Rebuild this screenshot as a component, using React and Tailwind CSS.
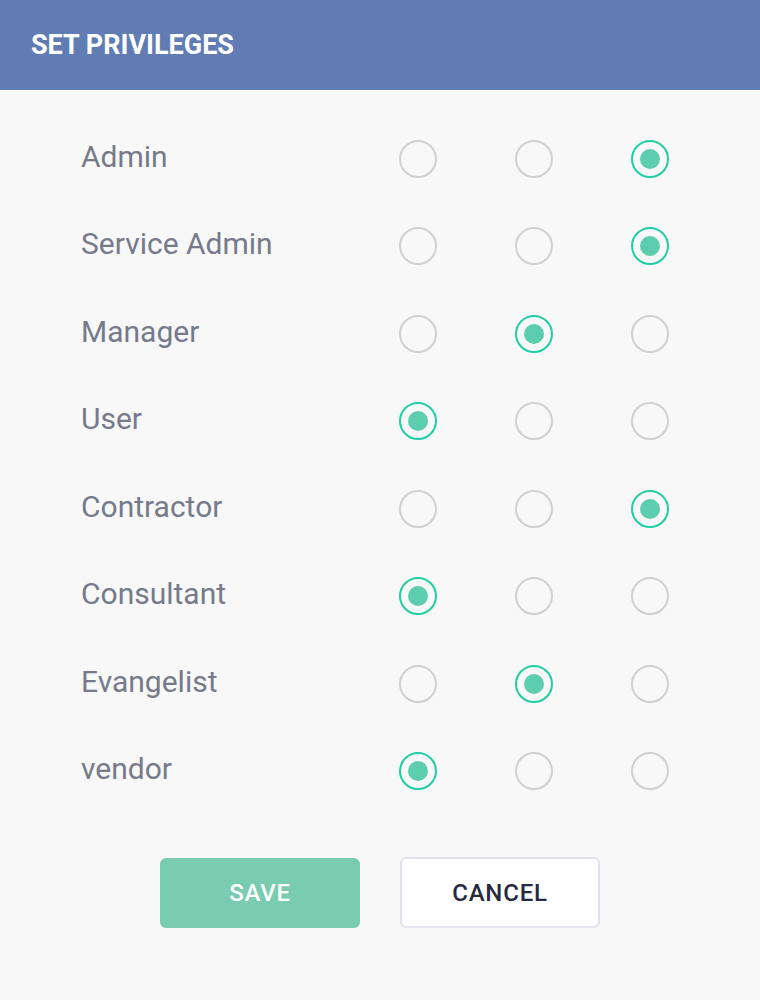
import React from "react";

const rows = [
  ["Admin", 2],
  ["Service Admin", 2],
  ["Manager", 1],
  ["User", 0],
  ["Contractor", 2],
  ["Consultant", 0],
  ["Evangelist", 1],
  ["vendor", 0],
];

function Radio({ on }) {
  return on ? (
    <div className="w-[38px] h-[38px] rounded-full border-2 border-[#1fcfa3] flex items-center justify-center">
      <div className="w-[20px] h-[20px] rounded-full bg-[#5ccdae]" />
    </div>
  ) : (
    <div className="w-[38px] h-[38px] rounded-full border-2 border-[#d0d0d0]" />
  );
}

export default function App() {
  return (
    <div className="w-[760px] h-[1000px] bg-[#f8f8f8] font-['Roboto',sans-serif]">
      <div className="h-[90px] bg-[#617cb3] flex items-center pl-[31px]">
        <h1 className="text-white text-[27px] font-bold mt-[1px]">SET PRIVILEGES</h1>
      </div>
      <div className="pt-[25px]">
        {rows.map(([label, sel]) => (
          <div key={label} className="h-[87.5px] flex items-center pl-[81px]">
            <div className="w-[318px] text-[30px] text-[#767a8a] -mt-[5px]">{label}</div>
            {[0, 1, 2].map((i) => (
              <div key={i} className="w-[116px]">
                <Radio on={i === sel} />
              </div>
            ))}
          </div>
        ))}
      </div>
      <div className="flex justify-center gap-[40px] mt-[43px]">
        <button className="w-[200px] h-[70px] rounded-[6px] bg-[#79ccb0] text-white text-[24px] font-medium tracking-[0.8px]">
          SAVE
        </button>
        <button className="w-[200px] h-[71px] -mt-[1px] rounded-[6px] bg-white border-2 border-[#e0e2ee] text-[#262940] text-[24px] font-medium tracking-[0.8px]">
          CANCEL
        </button>
      </div>
    </div>
  );
}
